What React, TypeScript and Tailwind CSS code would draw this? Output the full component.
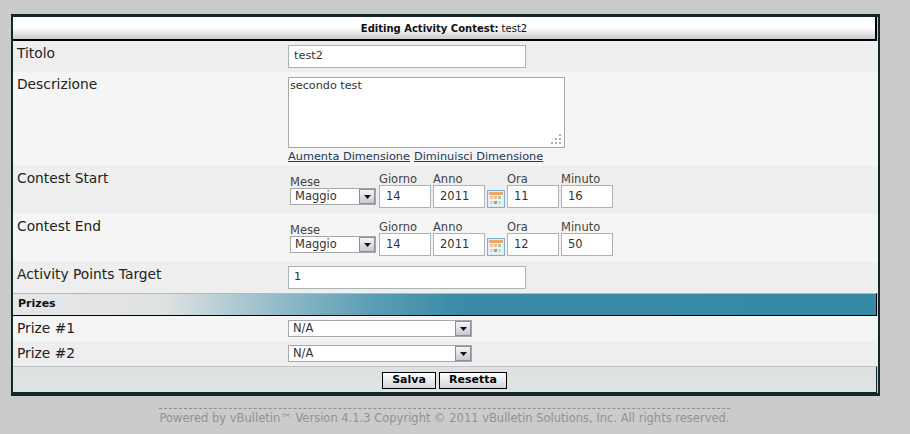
import React from "react";

const font = "font-['DejaVu_Sans',Verdana,sans-serif]";

function Arrow() {
  return (
    <span className="flex h-[15px] w-[16px] shrink-0 items-center justify-center border border-[#8a8f96] bg-gradient-to-b from-[#f4f5f7] to-[#c6cbd3]">
      <svg width="7" height="4" viewBox="0 0 7 4">
        <path d="M0 0H7L3.5 4Z" fill="#111" />
      </svg>
    </span>
  );
}

function Select({ value, width }: { value: string; width: string }) {
  return (
    <div className={`flex h-[17px] items-center justify-between border border-[#a5a9a9] bg-white pl-[4px] text-[11.5px] text-[#333] ${width}`}>
      <span>{value}</span>
      <Arrow />
    </div>
  );
}

function Field({ label, value, width }: { label: string; value: string; width: string }) {
  return (
    <div className={`flex flex-col ${width}`}>
      <span className="h-[14px] text-[11.5px] leading-[16px] text-[#444]">{label}</span>
      <div className="flex h-[23px] items-center border border-[#a9b4b4] bg-white pl-[6px] text-[11.5px] text-[#333]">{value}</div>
    </div>
  );
}

function Calendar() {
  return (
    <svg width="18" height="18" viewBox="0 0 18 18" className="shrink-0">
      <rect x="0.5" y="0.5" width="17" height="17" fill="#dcebf5" stroke="#7fb0d0" />
      <rect x="2" y="2" width="14" height="3" fill="#f0a468" />
      <rect x="2" y="5" width="14" height="11" fill="#f5f1e6" />
      <rect x="3" y="6" width="3" height="3" fill="#ecc09c" />
      <rect x="7" y="6" width="3" height="3" fill="#ecc09c" />
      <rect x="11" y="6" width="3" height="3" fill="#a5cba5" />
      <rect x="3" y="11" width="3" height="3" fill="#c4dcec" />
      <rect x="7" y="11" width="3" height="3" fill="#7db87d" />
      <rect x="11" y="11" width="3" height="3" fill="#c4dcec" />
    </svg>
  );
}

function DateRow({ title, hour, minute, bg }: { title: string; hour: string; minute: string; bg: string }) {
  return (
    <div className={`flex h-[48px] ${bg}`}>
      <div className="w-[275px] pl-[4px] pt-[4px] text-[13.8px] leading-[16px] text-[#222]">{title}</div>
      <div className="flex items-start pt-[5px]">
        <div className="flex w-[91px] flex-col pt-[3px]">
          <span className="h-[14px] pl-[2px] text-[11.5px] leading-[16px] text-[#444]">Mese</span>
          <div className="pl-[2px]">
            <Select value="Maggio" width="w-[86px]" />
          </div>
        </div>
        <Field label="Giorno" value="14" width="w-[52px] mr-[2px]" />
        <Field label="Anno" value="2011" width="w-[52px] mr-[2px]" />
        <div className="mt-[19px] mr-[2px] flex">
          <Calendar />
        </div>
        <Field label="Ora" value={hour} width="w-[52px] mr-[2px]" />
        <Field label="Minuto" value={minute} width="w-[52px]" />
      </div>
    </div>
  );
}

function InputRow({ title, value, bg, h }: { title: string; value: string; bg: string; h: string }) {
  return (
    <div className={`flex ${h} ${bg}`}>
      <div className="w-[275px] pl-[4px] pt-[4px] text-[13.8px] leading-[16px] text-[#222]">{title}</div>
      <div className="pt-[4px]">
        <div className="flex h-[23px] w-[238px] items-center border border-[#a9b4b4] bg-white pl-[5px] text-[11.3px] text-[#333]">{value}</div>
      </div>
    </div>
  );
}

function PrizeRow({ title, bg }: { title: string; bg: string }) {
  return (
    <div className={`flex h-[25px] ${bg}`}>
      <div className="flex w-[275px] items-center pl-[4px] text-[13.8px] text-[#222]">{title}</div>
      <div className="pt-[4px]">
        <Select value="N/A" width="w-[184px]" />
      </div>
    </div>
  );
}

function Button({ children, width }: { children: React.ReactNode; width: string }) {
  return (
    <button className={`flex h-[17px] items-center justify-center border border-black bg-gradient-to-b from-white to-[#d3d5d8] text-[11px] font-bold text-black ${width}`}>
      {children}
    </button>
  );
}

export default function App() {
  return (
    <div className={`h-[434px] w-[910px] overflow-hidden bg-[#cbcbcb] pt-[14px] pl-[11px] ${font}`}>
      <div className="w-[869px] border-t-[3px] border-r-[2px] border-b-[3px] border-l-[2px] border-[#14262b]">
        <div className="mr-[1px] flex h-[24px] items-center justify-center border-r-[2px] border-b-[2px] border-black bg-gradient-to-b from-white via-white to-[#c8cace] pt-[1px] text-[10px] text-[#111]">
          <b>Editing Activity Contest:</b>&nbsp;test2
        </div>
        <InputRow title="Titolo" value="test2" bg="bg-[#eeeeee]" h="h-[31px]" />
        <div className="flex h-[94px] bg-[#f5f5f5]">
          <div className="w-[275px] pl-[4px] pt-[4px] text-[13.8px] leading-[16px] text-[#222]">Descrizione</div>
          <div className="pt-[5px]">
            <div className="relative h-[71px] w-[277px] border border-[#a5aaaa] bg-white pl-[1px] text-[11.2px] leading-[15px] text-[#333]">
              secondo test
              <svg width="11" height="11" viewBox="0 0 11 11" className="absolute right-[2px] bottom-[2px]">
                <g fill="#b0b0b0">
                  <rect x="8" y="0" width="2" height="2" />
                  <rect x="4" y="4" width="2" height="2" />
                  <rect x="8" y="4" width="2" height="2" />
                  <rect x="0" y="8" width="2" height="2" />
                  <rect x="4" y="8" width="2" height="2" />
                  <rect x="8" y="8" width="2" height="2" />
                </g>
              </svg>
            </div>
            <div className="mt-[2px] flex gap-[4px] text-[11.3px] leading-[14px] text-[#22395c] underline">
              <span>Aumenta Dimensione</span>
              <span>Diminuisci Dimensione</span>
            </div>
          </div>
        </div>
        <DateRow title="Contest Start" hour="11" minute="16" bg="bg-[#eeeeee]" />
        <DateRow title="Contest End" hour="12" minute="50" bg="bg-[#f5f5f5]" />
        <InputRow title="Activity Points Target" value="1" bg="bg-[#eeeeee]" h="h-[31px]" />
        <div className="mr-[1px] flex h-[23px] items-center border-t border-r border-b border-t-[#b5b8b8] border-r-black border-b-black bg-[#3a8aa4] bg-[linear-gradient(to_right,#e6e7e8_0px,#dfe2e3_150px,#8fbac8_270px,#5a9db4_360px,#3a8ba7_450px,#368aa6_100%)] pl-[5px] text-[11px] font-bold text-[#111]">
          Prizes
        </div>
        <PrizeRow title="Prize #1" bg="bg-[#f5f5f5]" />
        <PrizeRow title="Prize #2" bg="bg-[#eeeeee]" />
        <div className="mr-[1px] flex h-[27px] items-center justify-center gap-[3px] border-t border-r border-b border-t-[#c0c3c4] border-r-[#14262b] border-b-[#14262b] bg-gradient-to-b from-[#dfe0e2] to-[#dde4e4] pt-[1px]">
          <Button width="w-[54px]">Salva</Button>
          <Button width="w-[68px]">Resetta</Button>
        </div>
      </div>
      <div className="ml-[148px] mt-[12px] w-[571px] border-t border-dashed border-[#8f8f8f] text-center text-[11.5px] leading-[18px] whitespace-nowrap text-[#929292]">
        Powered by vBulletin™ Version 4.1.3 Copyright © 2011 vBulletin Solutions, Inc. All rights reserved.
      </div>
    </div>
  );
}
